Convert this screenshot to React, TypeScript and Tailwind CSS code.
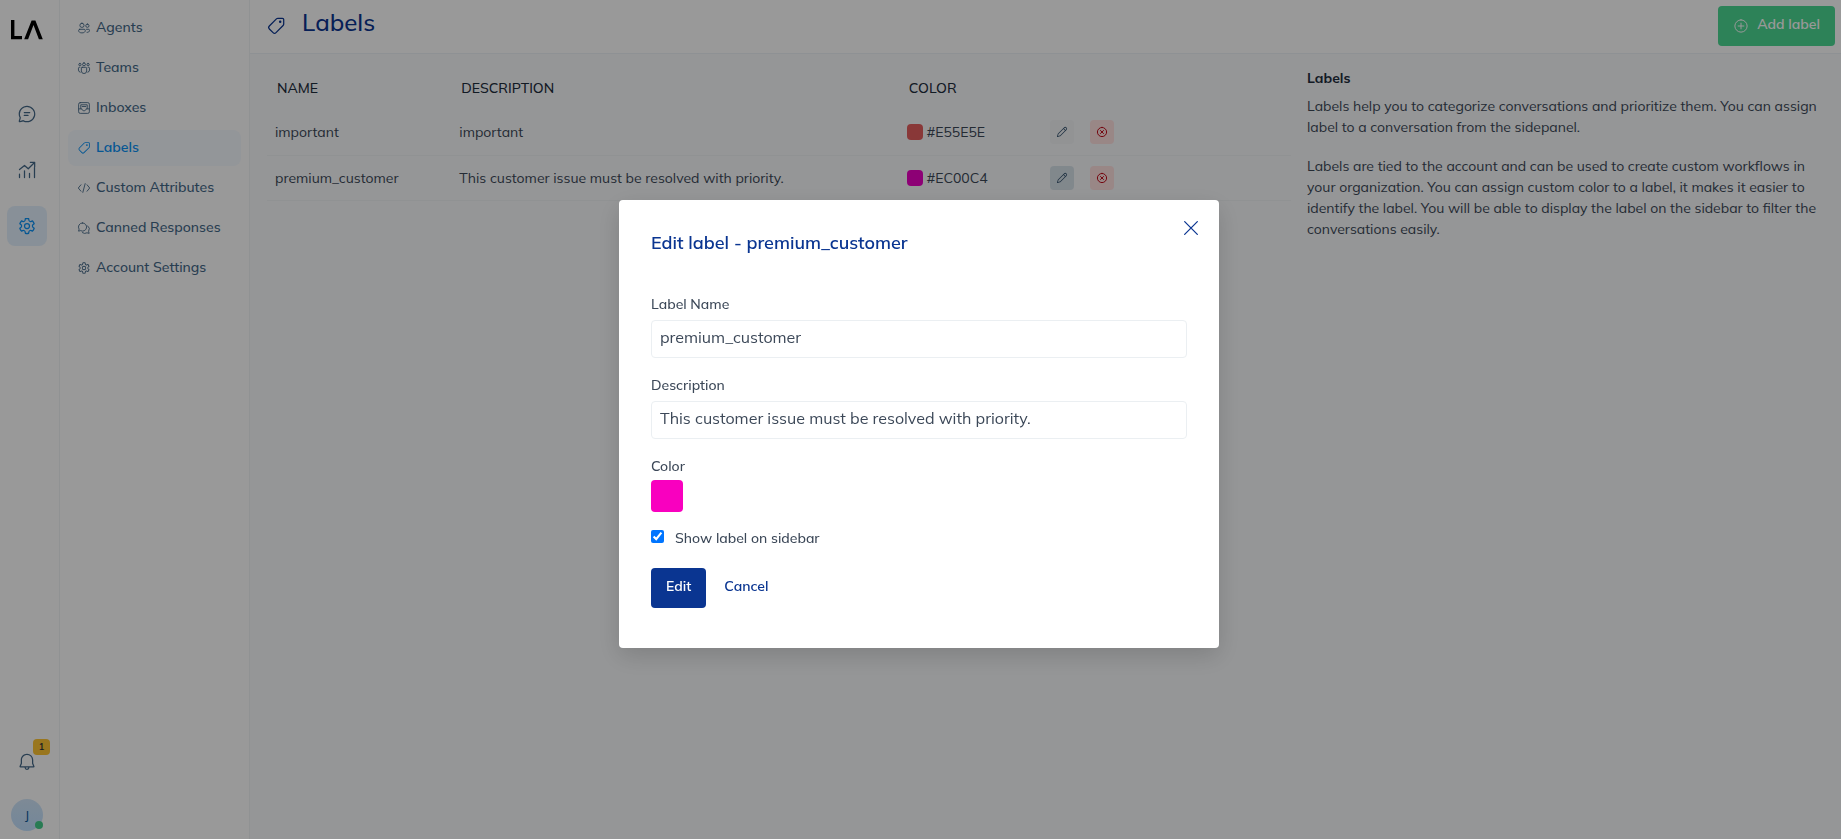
import React from 'react';

const paths = {
  chat: 'M12 2c5.523 0 10 4.477 10 10s-4.477 10-10 10a9.96 9.96 0 0 1-4.587-1.112l-3.826 1.067a1.25 1.25 0 0 1-1.54-1.54l1.068-3.823A9.96 9.96 0 0 1 2 12C2 6.477 6.477 2 12 2Zm0 1.5A8.5 8.5 0 0 0 3.5 12c0 1.47.373 2.883 1.073 4.137l.15.27-1.112 3.984 3.987-1.112.27.15A8.5 8.5 0 1 0 12 3.5ZM8.75 13h4.498a.75.75 0 0 1 .102 1.493l-.102.007H8.75a.75.75 0 0 1-.102-1.493L8.75 13Zm0-3.5h6.505a.75.75 0 0 1 .101 1.493l-.101.007H8.75a.75.75 0 0 1-.102-1.493L8.75 9.5Z',
  settings:
    'M12.012 2.25c.734.008 1.465.093 2.182.253a.75.75 0 0 1 .582.649l.17 1.527a1.384 1.384 0 0 0 1.927 1.116l1.401-.615a.75.75 0 0 1 .85.174 9.792 9.792 0 0 1 2.204 3.792.75.75 0 0 1-.271.825l-1.242.916a1.381 1.381 0 0 0 0 2.226l1.243.915a.75.75 0 0 1 .272.826 9.797 9.797 0 0 1-2.204 3.792.75.75 0 0 1-.848.175l-1.407-.617a1.38 1.38 0 0 0-1.926 1.114l-.169 1.526a.75.75 0 0 1-.572.647 9.518 9.518 0 0 1-4.406 0 .75.75 0 0 1-.572-.647l-.168-1.524a1.382 1.382 0 0 0-1.926-1.11l-1.406.616a.75.75 0 0 1-.849-.175 9.798 9.798 0 0 1-2.204-3.796.75.75 0 0 1 .272-.826l1.243-.916a1.38 1.38 0 0 0 0-2.226l-1.243-.914a.75.75 0 0 1-.271-.826 9.793 9.793 0 0 1 2.204-3.792.75.75 0 0 1 .85-.174l1.4.615a1.387 1.387 0 0 0 1.93-1.118l.17-1.526a.75.75 0 0 1 .583-.65c.717-.159 1.45-.243 2.201-.252Zm0 1.5a9.135 9.135 0 0 0-1.354.117l-.109.977A2.886 2.886 0 0 1 6.525 7.17l-.898-.394a8.293 8.293 0 0 0-1.348 2.317l.798.587a2.881 2.881 0 0 1 0 4.643l-.799.588c.32.842.776 1.626 1.348 2.322l.905-.397a2.882 2.882 0 0 1 4.017 2.318l.11.984c.889.15 1.798.15 2.687 0l.11-.984a2.881 2.881 0 0 1 4.018-2.322l.905.396a8.296 8.296 0 0 0 1.347-2.318l-.798-.588a2.881 2.881 0 0 1 0-4.643l.796-.587a8.293 8.293 0 0 0-1.348-2.317l-.896.393a2.884 2.884 0 0 1-4.023-2.324l-.11-.976a8.988 8.988 0 0 0-1.333-.117ZM12 8.25a3.75 3.75 0 1 1 0 7.5 3.75 3.75 0 0 1 0-7.5Zm0 1.5a2.25 2.25 0 1 0 0 4.5 2.25 2.25 0 0 0 0-4.5Z',
  bell: 'M12 1.996a7.49 7.49 0 0 1 7.496 7.25l.004.25v4.097l1.38 3.156a1.249 1.249 0 0 1-1.145 1.75L15 18.502a3 3 0 0 1-5.995.177L9 18.499H4.275a1.251 1.251 0 0 1-1.147-1.747L4.5 13.594V9.496c0-4.155 3.352-7.5 7.5-7.5ZM13.5 18.5l-3 .002a1.5 1.5 0 0 0 2.993.145l.006-.147ZM12 3.496c-3.32 0-6 2.674-6 6v4.41L4.656 17h14.697L18 13.907V9.509l-.004-.225A5.988 5.988 0 0 0 12 3.496Z',
  tag: 'M19.75 2A2.25 2.25 0 0 1 22 4.25v5.462a3.25 3.25 0 0 1-.952 2.298l-8.5 8.503a3.255 3.255 0 0 1-4.597.001L3.489 16.06a3.25 3.25 0 0 1-.003-4.596l8.5-8.51A3.25 3.25 0 0 1 14.284 2h5.466Zm0 1.5h-5.465c-.465 0-.91.185-1.239.513l-8.512 8.523a1.75 1.75 0 0 0 .015 2.462l4.461 4.454a1.755 1.755 0 0 0 2.477 0l8.5-8.503a1.75 1.75 0 0 0 .513-1.237V4.25a.75.75 0 0 0-.75-.75ZM17 5.502a1.5 1.5 0 1 1 0 3 1.5 1.5 0 0 1 0-3Z',
  edit: 'M21.03 2.97a3.578 3.578 0 0 1 0 5.06L9.062 20a2.25 2.25 0 0 1-.999.58l-5.116 1.395a.75.75 0 0 1-.92-.921l1.395-5.116a2.25 2.25 0 0 1 .58-.999L15.97 2.97a3.578 3.578 0 0 1 5.06 0ZM15 6.06 5.062 16a.75.75 0 0 0-.193.333l-1.05 3.85 3.85-1.05A.75.75 0 0 0 8 18.938L17.94 9 15 6.06Zm2.03-2.03-.97.97L19 7.94l.97-.97a2.079 2.079 0 0 0-2.94-2.94Z',
};

const strokes = {
  trending: 'M3 21v-4M9 21v-8M15 21v-5M21 21V9M3 11.5 9 6.5l4.5 4L21 3M16 2.8h5.2V8',
  people:
    'M8.5 3.8a3.6 3.6 0 1 1 0 7.2 3.6 3.6 0 0 1 0-7.2ZM17.8 5.3a2.7 2.7 0 1 1 0 5.6 2.7 2.7 0 0 1 0-5.6ZM4.7 14.2h7.6a1.9 1.9 0 0 1 1.9 1.9c0 2.9-2.3 4.3-5.7 4.3s-5.7-1.4-5.7-4.3a1.9 1.9 0 0 1 1.9-1.9ZM16.2 14.2h3.3a1.9 1.9 0 0 1 1.9 1.9c0 2.3-1.7 3.4-4.2 3.4',
  team: 'M12 3.2a2.5 2.5 0 1 1 0 5 2.5 2.5 0 0 1 0-5ZM5 4.2a2 2 0 1 1 0 4 2 2 0 0 1 0-4ZM19 4.2a2 2 0 1 1 0 4 2 2 0 0 1 0-4ZM8.9 10.8h6.2c.8 0 1.4.6 1.4 1.4V17a4.5 4.5 0 0 1-9 0v-4.8c0-.8.6-1.4 1.4-1.4ZM5 10.8H3.9c-.8 0-1.4.6-1.4 1.4v3.3a3.7 3.7 0 0 0 3 3.7M19 10.8h1.1c.8 0 1.4.6 1.4 1.4v3.3a3.7 3.7 0 0 1-3 3.7',
  inbox:
    'M5.5 2.8h13a2.7 2.7 0 0 1 2.7 2.7v13a2.7 2.7 0 0 1-2.7 2.7h-13a2.7 2.7 0 0 1-2.7-2.7v-13a2.7 2.7 0 0 1 2.7-2.7ZM3 13.5h5.5c0 1.9 1.5 3.3 3.5 3.3s3.5-1.4 3.5-3.3H21M6.5 13V6.5h11V13M9 9.5h6',
  code: 'M6.8 6.5 2.2 12l4.6 5.5M17.2 6.5l4.6 5.5-4.6 5.5M14 4.5 10 19.5',
  chats:
    'M9.5 3.3a7 7 0 1 1-3.3 13.2l-3.5.9.9-3.4A7 7 0 0 1 9.5 3.3ZM9.3 20a7 7 0 0 0 7.8.2l3.7 1-.9-3.5a7 7 0 0 0-1.7-9.5',
  add: 'M12 2.8a9.2 9.2 0 1 1 0 18.4 9.2 9.2 0 0 1 0-18.4ZM12 7.7v8.6M7.7 12h8.6',
  dismissCircle: 'M12 2.8a9.2 9.2 0 1 1 0 18.4 9.2 9.2 0 0 1 0-18.4ZM9 9l6 6M15 9l-6 6',
  dismiss: 'M4.4 4.4l15.2 15.2M19.6 4.4 4.4 19.6',
};

type IconName = keyof typeof paths | keyof typeof strokes;

function Icon({ name, className }: { name: IconName; className: string }) {
  if (name in paths) {
    return (
      <svg viewBox="0 0 24 24" fill="currentColor" fillRule="evenodd" className={className} aria-hidden="true">
        <path d={paths[name as keyof typeof paths]} />
      </svg>
    );
  }
  return (
    <svg
      viewBox="0 0 24 24"
      fill="none"
      stroke="currentColor"
      strokeWidth={name === 'dismissCircle' ? 2 : 1.5}
      strokeLinecap="round"
      strokeLinejoin="round"
      className={className}
      aria-hidden="true"
    >
      <path d={strokes[name as keyof typeof strokes]} />
    </svg>
  );
}

const rail: { name: IconName; label: string; active?: boolean }[] = [
  { name: 'chat', label: 'Conversations' },
  { name: 'trending', label: 'Reports' },
  { name: 'settings', label: 'Settings', active: true },
];

const menu: { name: IconName; label: string; active?: boolean }[] = [
  { name: 'people', label: 'Agents' },
  { name: 'team', label: 'Teams' },
  { name: 'inbox', label: 'Inboxes' },
  { name: 'tag', label: 'Labels', active: true },
  { name: 'code', label: 'Custom Attributes' },
  { name: 'chats', label: 'Canned Responses' },
  { name: 'settings', label: 'Account Settings' },
];

const labels = [
  { name: 'important', description: 'important', color: '#E55E5E', swatch: 'bg-[#e55e5e]', edit: 'bg-[#f3f5f7]' },
  {
    name: 'premium_customer',
    description: 'This customer issue must be resolved with priority.',
    color: '#EC00C4',
    swatch: 'bg-[#ec00c4]',
    edit: 'bg-[#d8e3ea]',
  },
];

function Rail() {
  return (
    <nav aria-label="Primary" className="flex w-15 shrink-0 flex-col border-r border-[#f0f4f5] bg-white pb-2">
      <div className="flex w-[54px] grow flex-col items-center">
        <a href="#home" aria-label="Home" className="mt-5">
          <svg viewBox="0 0 32 20" className="h-5 w-8" aria-hidden="true">
            <path d="M1.7 0v17.6h9.3" fill="none" stroke="#000" strokeWidth="3.4" />
            <path d="M13.2 19.3 20.6.4h3.8L31.8 19.3h-3.9L22.5 5 17.1 19.3Z" />
          </svg>
        </a>
        <div className="mt-[54px] flex flex-col gap-4">
          {rail.map((r) => (
            <a
              key={r.name}
              href={`#${r.label.toLowerCase()}`}
              aria-label={r.label}
              className={
                r.active
                  ? 'flex size-10 items-center justify-center rounded-lg bg-[#e3f1fd] text-[#0a91f5]'
                  : 'flex size-10 items-center justify-center rounded-lg text-[#446888]'
              }
            >
              <Icon name={r.name} className="size-5" />
            </a>
          ))}
        </div>
        <button type="button" aria-label="Notifications" className="relative mt-auto mb-[17px] flex size-10 items-center justify-center rounded-lg text-[#446888]">
          <Icon name="bell" className="size-5" />
          <span className="absolute -top-[3px] left-[26px] flex h-4 w-[17px] items-center justify-center rounded bg-[#ffc532] pb-px text-[10px] font-semibold text-[#1f2d3d]">
            1
          </span>
        </button>
        <button type="button" aria-label="Profile" className="relative flex size-8 items-center justify-center rounded-full bg-linear-to-b from-[#d1e6fa] to-[#c2e1ff] text-xs font-medium text-[#0a5a99]">
          J
          <span className="absolute right-0 bottom-[2px] size-2 rounded-full bg-[#44ce8b]" />
        </button>
      </div>
    </nav>
  );
}

function Menu() {
  return (
    <nav aria-label="Settings" className="w-[190px] shrink-0 border-r border-[#f0f4f5] bg-white px-2 pt-[10px]">
      <ul className="flex flex-col gap-1">
        {menu.map((m) => (
          <li key={m.label}>
            <a
              href={`#${m.label.toLowerCase().replace(' ', '-')}`}
              className={
                m.active
                  ? 'flex h-9 items-center gap-[5px] rounded-lg bg-[#f5faff] px-[9px] text-sm font-semibold text-[#0a91f5]'
                  : 'flex h-9 items-center gap-[5px] rounded-lg px-[9px] text-sm font-medium text-[#446888]'
              }
            >
              <Icon name={m.name} className="size-[14px]" />
              <span className="pb-[3px]">{m.label}</span>
            </a>
          </li>
        ))}
      </ul>
    </nav>
  );
}

function LabelTable() {
  return (
    <table className="w-full table-fixed border-collapse text-sm text-[#3c4858]">
      <colgroup>
        <col className="w-[18%]" />
        <col className="w-[43.7%]" />
        <col className="w-[13%]" />
        <col />
      </colgroup>
      <thead>
        <tr className="h-10 text-left text-[#1f2d3d] uppercase">
          <th className="px-[10px] pb-1 font-medium">Name</th>
          <th className="px-[10px] pb-1 font-medium">Description</th>
          <th className="px-[10px] pb-1 font-medium">Color</th>
          <td />
        </tr>
      </thead>
      <tbody>
        {labels.map((l) => (
          <tr key={l.name} className="h-[45px] border-b border-[#f0f4f5]">
            <td className="px-2">{l.name}</td>
            <td className="px-2">{l.description}</td>
            <td className="px-2">
              <div className="flex items-center gap-1">
                <span className={`size-4 shrink-0 rounded ${l.swatch}`} />
                <span>{l.color}</span>
              </div>
            </td>
            <td className="pl-[18px]">
              <div className="flex items-center gap-4">
                <button type="button" aria-label={`Edit ${l.name}`} className={`flex size-6 items-center justify-center rounded text-[#32506c] ${l.edit}`}>
                  <Icon name="edit" className="size-3" />
                </button>
                <button type="button" aria-label={`Delete ${l.name}`} className="flex size-6 items-center justify-center rounded bg-[#ffe1e0] text-[#c30d1c]">
                  <Icon name="dismissCircle" className="size-3" />
                </button>
              </div>
            </td>
          </tr>
        ))}
      </tbody>
    </table>
  );
}

function EditDialog() {
  return (
    <div className="fixed inset-0 flex items-center justify-center bg-black/40 pt-2 pr-[3px]">
      <div role="dialog" aria-modal="true" aria-labelledby="dialog-title" className="relative w-150 rounded bg-white px-8 pt-8 pb-10 shadow-[0_8px_24px_rgba(0,0,0,0.15)]">
        <button type="button" aria-label="Close" className="absolute top-4 right-4 flex size-6 items-center justify-center text-[#0a3591]">
          <Icon name="dismiss" className="size-5" />
        </button>
        <h2 id="dialog-title" className="text-lg leading-[22px] font-semibold text-[#0a3591]">
          Edit label - premium_customer
        </h2>
        <form className="mt-10 text-sm leading-5 font-medium text-[#3c4858]" onSubmit={(e) => e.preventDefault()}>
          <label htmlFor="label-name" className="block">
            Label Name
          </label>
          <input
            id="label-name"
            type="text"
            defaultValue="premium_customer"
            className="mt-[6px] h-[38px] w-full rounded border border-[#ebeff2] bg-white px-2 pb-1 text-base font-normal text-[#3c4858] outline-none"
          />
          <label htmlFor="label-description" className="mt-[17px] block">
            Description
          </label>
          <input
            id="label-description"
            type="text"
            defaultValue="This customer issue must be resolved with priority."
            className="mt-[6px] h-[38px] w-full rounded border border-[#ebeff2] bg-white px-2 pb-1 text-base font-normal text-[#3c4858] outline-none"
          />
          <span id="color-label" className="mt-[17px] block">
            Color
          </span>
          <button type="button" aria-labelledby="color-label" className="mt-1 block size-8 rounded bg-[#f900bf]" />
          <div className="mt-4 flex items-center gap-[11px]">
            <input id="show-label" type="checkbox" defaultChecked className="mb-[2px] size-[13px]" />
            <label htmlFor="show-label">Show label on sidebar</label>
          </div>
          <div className="mt-5 flex gap-1">
            <button type="submit" className="h-10 rounded bg-[#0a3591] px-[15px] pb-1 font-semibold text-white">
              Edit
            </button>
            <button type="button" className="h-10 rounded px-[14px] pb-1 font-semibold text-[#0a3591]">
              Cancel
            </button>
          </div>
        </form>
      </div>
    </div>
  );
}

export default function App() {
  return (
    <div className="flex h-screen overflow-hidden bg-white font-['Mulish','Open_Sans',sans-serif]">
      <Rail />
      <Menu />
      <div className="flex min-w-0 grow flex-col bg-[#f8fafc]">
        <header className="flex h-[54px] shrink-0 items-center justify-between border-b border-[#edf2f7] bg-white pr-[6px] pb-px pl-4">
          <h1 className="flex items-center gap-4 text-2xl font-medium text-[#0a3591]">
            <Icon name="tag" className="size-5" />
            <span className="pb-2">Labels</span>
          </h1>
          <button type="button" className="flex h-10 items-center gap-2 rounded bg-[#4bd993] px-[15px] text-sm font-semibold text-white">
            <Icon name="add" className="size-4" />
            <span className="pb-1">Add label</span>
          </button>
        </header>
        <main className="flex grow items-start gap-4 p-4">
          <section className="w-[1025px] min-w-0 shrink pl-px">
            <LabelTable />
          </section>
          <aside className="min-w-0 flex-1 text-sm leading-[21px] text-[#3c4858]">
            <h2 className="-mt-[2px] mb-[7px] font-bold text-[#1f2d3d]">Labels</h2>
            <p>
              Labels help you to categorize conversations and prioritize them. You can assign label to a conversation
              from the sidepanel.
            </p>
            <p className="mt-[18px]">
              Labels are tied to the account and can be used to create custom workflows in your organization. You can
              assign custom color to a label, it makes it easier to identify the label. You will be able to display the
              label on the sidebar to filter the conversations easily.
            </p>
          </aside>
        </main>
      </div>
      <EditDialog />
    </div>
  );
}
